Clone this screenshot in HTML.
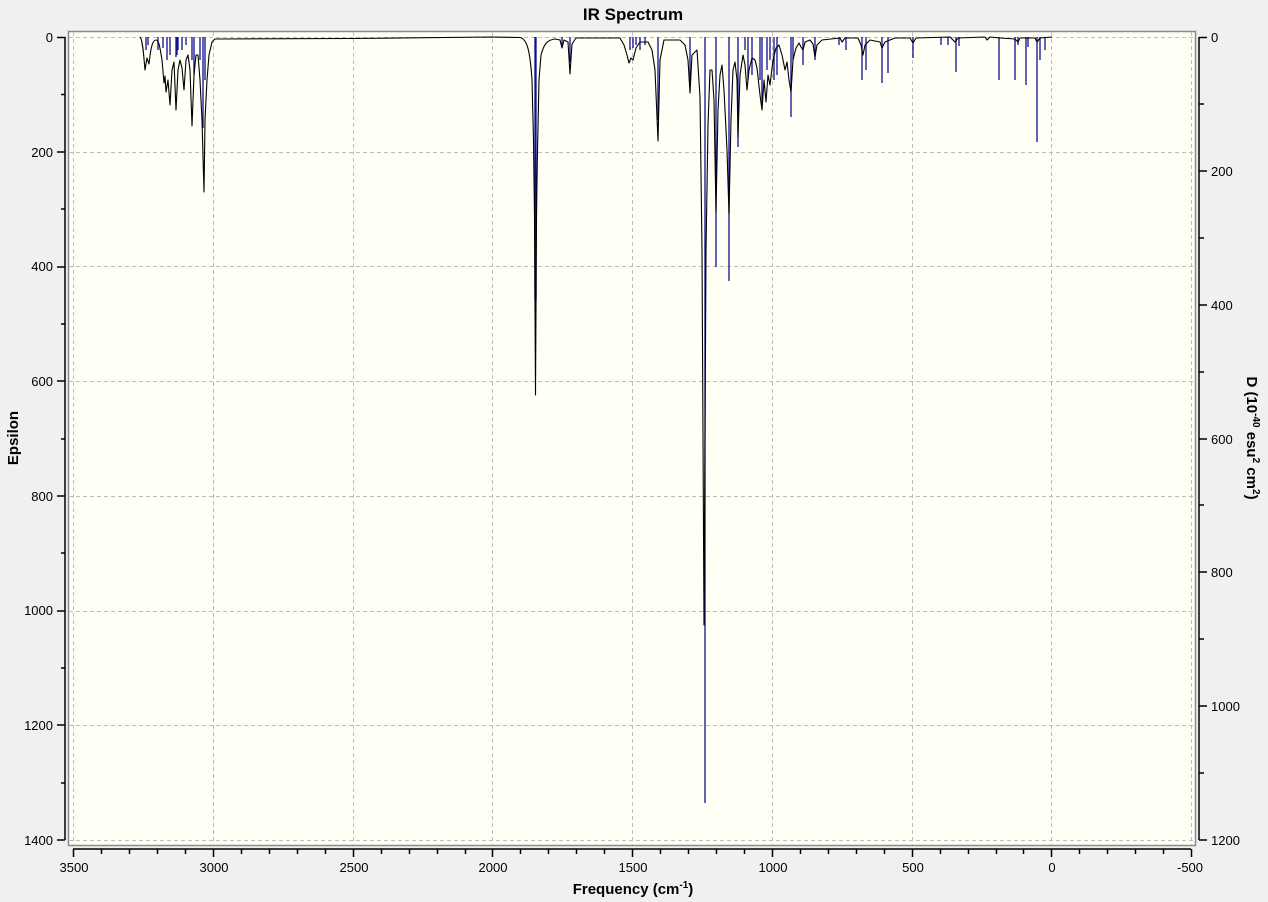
<!DOCTYPE html>
<html><head><meta charset="utf-8"><style>
html,body{margin:0;padding:0;background:#f0f0f0;}
svg{display:block;font-family:"Liberation Sans",sans-serif;}
</style></head><body>
<svg width="1268" height="902" viewBox="0 0 1268 902" xmlns="http://www.w3.org/2000/svg">
<rect x="0" y="0" width="1268" height="902" fill="#f0f0f0"/>
<text x="633" y="20" text-anchor="middle" font-size="17" font-weight="bold" fill="#000">IR Spectrum</text>
<rect x="68.5" y="31.5" width="1127" height="814" fill="#fffff5" stroke="#8a8a8a" stroke-width="1.5"/>
<g stroke="#bdbdbd" stroke-width="1" stroke-dasharray="4,3" fill="none">
<path d="M73.5,32V845M213.5,32V845M353.5,32V845M492.5,32V845M632.5,32V845M772.5,32V845M912.5,32V845M1051.5,32V845M1191.5,32V845"/>
<path d="M69,37.5H1195M69,152.5H1195M69,266.5H1195M69,381.5H1195M69,496.5H1195M69,611.5H1195M69,725.5H1195M69,840.5H1195"/>
</g>
<g stroke="#000" stroke-width="1.5" fill="none">
<path d="M65,37V840"/>
<path d="M57,37.5H65M57,152H65M57,267H65M57,381H65M57,496H65M57,611H65M57,725H65M57,840H65"/>
<path d="M61,94.5H65M61,209H65M61,324H65M61,439H65M61,553H65M61,668H65M61,783H65"/>
<path d="M1199,37V840"/>
<path d="M1199,37.5H1207M1199,171H1207M1199,305H1207M1199,439H1207M1199,572H1207M1199,706H1207M1199,840H1207"/>
<path d="M1199,104H1204M1199,238H1204M1199,372H1204M1199,505H1204M1199,639H1204M1199,773H1204"/>
<path d="M73,849H1191"/>
<path d="M73.5,849V857M213.5,849V857M353.5,849V857M492.5,849V857M632.5,849V857M772.5,849V857M912.5,849V857M1051.5,849V857M1191.5,849V857"/>
<path d="M101.5,849V854M129.5,849V854M157.5,849V854M185.5,849V854M241.5,849V854M269.5,849V854M297.5,849V854M325.5,849V854M381.5,849V854M409.5,849V854M437.5,849V854M465.5,849V854M520.5,849V854M548.5,849V854M576.5,849V854M604.5,849V854M660.5,849V854M688.5,849V854M716.5,849V854M744.5,849V854M800.5,849V854M828.5,849V854M856.5,849V854M884.5,849V854M940.5,849V854M968.5,849V854M996.5,849V854M1023.5,849V854M1079.5,849V854M1107.5,849V854M1135.5,849V854M1163.5,849V854"/>
</g>
<g font-size="13" fill="#000" text-anchor="end">
<text x="53" y="42">0</text><text x="53" y="157">200</text><text x="53" y="271">400</text><text x="53" y="386">600</text><text x="53" y="501">800</text><text x="53" y="615">1000</text><text x="53" y="730">1200</text><text x="53" y="845">1400</text>
</g>
<g font-size="13" fill="#000">
<text x="1211" y="42">0</text><text x="1211" y="176">200</text><text x="1211" y="310">400</text><text x="1211" y="444">600</text><text x="1211" y="577">800</text><text x="1211" y="711">1000</text><text x="1211" y="845">1200</text>
</g>
<g font-size="13" fill="#000" text-anchor="middle">
<text x="74" y="872">3500</text><text x="214" y="872">3000</text><text x="354" y="872">2500</text><text x="493" y="872">2000</text><text x="633" y="872">1500</text><text x="773" y="872">1000</text><text x="913" y="872">500</text><text x="1052" y="872">0</text><text x="1190" y="872">-500</text>
</g>
<text x="633" y="894" text-anchor="middle" font-size="15" font-weight="bold">Frequency (cm<tspan font-size="10" dy="-6">-1</tspan><tspan dy="6">)</tspan></text>
<text transform="translate(18,438) rotate(-90)" text-anchor="middle" font-size="15" font-weight="bold">Epsilon</text>
<text transform="translate(1247,438) rotate(90)" text-anchor="middle" font-size="15" font-weight="bold">D (10<tspan font-size="10" dy="-6">-40</tspan><tspan dy="6"> esu</tspan><tspan font-size="10" dy="-6">2</tspan><tspan dy="6"> cm</tspan><tspan font-size="10" dy="-6">2</tspan><tspan dy="6">)</tspan></text>
<g stroke="#101090" stroke-width="1.3" fill="none">
<path d="M146,37V50M148,37V45M158,37V50M163,37V48M167,37V60M170,37V55M176,37V57M177,37V55M178,37V50M182,37V50M186,37V45M192,37V60M194,37V75M200,37V60M203,37V128M205,37V80
M536,37V300M535,37V300M562,37V45M570,37V62M630,37V50M633,37V48M636,37V45M640,37V50M645,37V45M658,37V120M690,37V82M705,37V803M716,37V267M729,37V281M738,37V147M745,37V50M748,37V80M752,37V75M760,37V80M762,37V105M767,37V70M770,37V60M774,37V80M777,37V75M791,37V117M793,37V60M803,37V65M815,37V60M839,37V45M846,37V50M862,37V80M866,37V70M882,37V83M888,37V73M913,37V58M941,37V45M948,37V45M956,37V72M959,37V46M999,37V80M1015,37V80M1018,37V45M1026,37V85M1028,37V47M1037,37V142M1040,37V60M1045,37V50"/>
</g>
<path fill="none" stroke="#000" stroke-width="1.1" stroke-linejoin="round" d="M140,37 C143,40 144,60 145,70 L147,58 L149,64 C151,45 153,40 156,40 C159,40 160,48 162,60 L164,83 L165,76 L166,92 L168,80 L170,105 L172,70 L174,62 L176,110 L178,70 L180,60 L182,68 L184,90 L186,60 L188,55 L190,70 L192,126 L194,75 L196,55 L198,55 L200,80 L202,120 L204,192 L205,120 L207,80 L209,55 L212,42 L215,39 L350,38.5 L490,37 L520,37.5 C527,39 530,50 532,80 L533.5,140 L534.5,217 L535.5,395 L536.5,217 L537.3,160 L539,80 L541,55 C544,44 547,40 555,39 L560,40 L562,48 L564,40 L568,42 L570,74 L572,44 L576,38 L620,38 L624,45 L627,55 L629,63 L631,58 L633,60 L636,48 L640,42 L648,42 L652,50 L655,70 L658,141 L660,60 L664,40 L680,40 L685,45 L688,60 L690,93 L692,55 L697,50 L700,97 L702,250 L704,625 L706,250 L708,125 L710,70 L712,70 L714,100 L716,212 L718,110 L720,75 L722,65 L724,90 L727,150 L729,214 L731,120 L733,70 L735,62 L737,80 L738,137 L740,75 L743,55 L745,65 L747,90 L749,70 L752,58 L755,60 L757,68 L760,95 L762,110 L764,80 L766,102 L768,75 L770,85 L773,60 L776,48 L779,45 L782,55 L785,70 L787,62 L789,80 L791,92 L793,60 L796,48 L799,43 L801,47 L803,50 L805,42 L810,40 L813,44 L815,57 L817,45 L822,40 L840,38 L842,42 L845,38 L858,38 L861,45 L863,55 L865,45 L870,40 L880,42 L882,48 L885,42 L890,40 L895,38 L910,38 L913,43 L916,38 L950,37 L955,42 L958,38 L985,37 L987,40 L990,37 L1000,38 L1015,39 L1018,42 L1020,38 L1035,38 L1037,42 L1040,38 L1052,37"/>
</svg>
</body></html>
